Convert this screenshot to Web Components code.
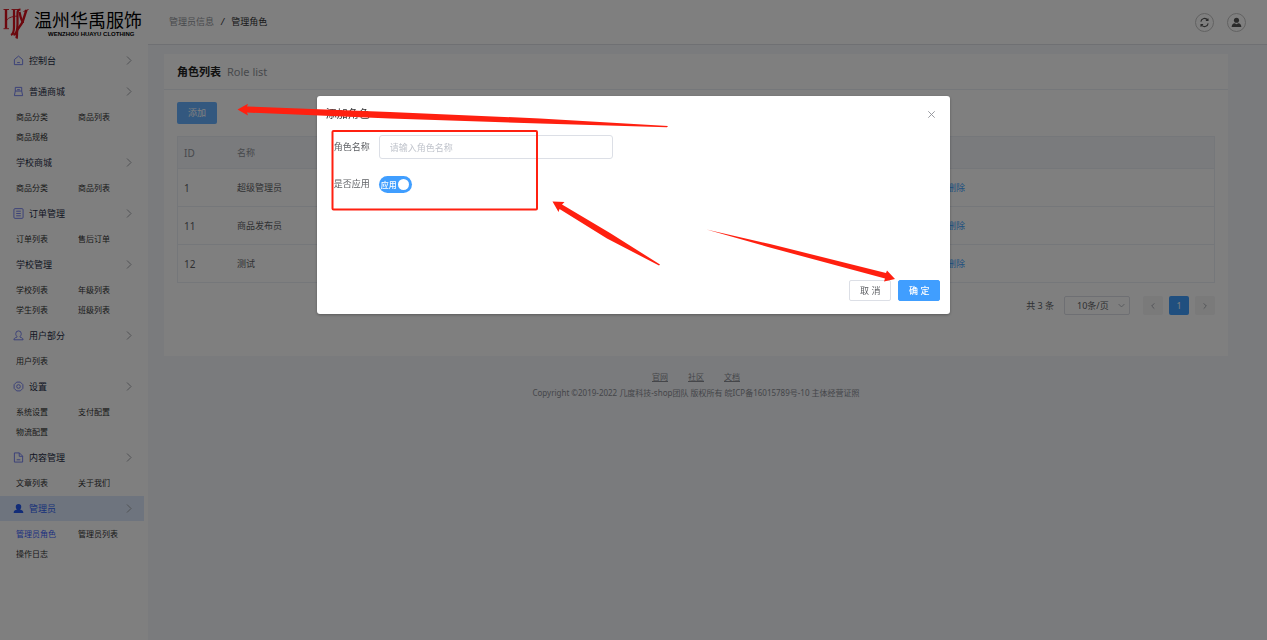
<!DOCTYPE html>
<html lang="zh-CN">
<head>
<meta charset="utf-8">
<title>管理角色</title>
<style>
html,body{margin:0;height:100%}
body{font-family:"Noto Sans","Noto Sans CJK SC",sans-serif;font-size:9px;line-height:14px;color:#606266;background:#f4f6fa}
</style>
</head>
<body>
<role-app></role-app>
<script>
const icons={
home:'<path d="M1.500 5 6 1.200 10.500 5v5.500h-9zM4.500 8.300h3" />',
shop:'<path d="M2.500 1.500h7v4h-7zM2.500 5.500 1.500 10.500h9L9.500 5.500M4.500 4h3"/>',
list:'<rect x="1" y=".7" width="10" height="10.600" rx="1.200"/><path d="M3.500 3.500h5M3.500 6h5M3.500 8.500h5"/>',
user:'<path d="M1 10.700c0-1.800 1.400-2.300 3.300-2.900V7C3.300 6 3 5 3 4a3 3 0 0 1 6 0c0 1-.3 2-1.300 3v.8c1.900.6 3.300 1.100 3.300 2.900z"/>',
gear:'<path d="M4 1.200h4L10.800 4v4L8 10.800H4L1.200 8V4z"/><circle cx="6" cy="6" r="2"/>',
doc:'<path d="M1.500 1h5.500l3.500 3.500V11h-9zM6.800 1v3.700h3.700M4 8.500h4"/>',
admin:'<path fill="currentColor" stroke="none" d="M.7 11c0-2.600 1.600-3.200 3.600-3.800C3.400 6.300 3 5.300 3 4a3 3 0 0 1 6 0c0 1.300-.4 2.300-1.300 3.200 2 .6 3.600 1.200 3.600 3.800z"/>'
};
const svg=(body,vb='0 0 12 12')=>`<svg viewBox="${vb}" fill="none" stroke="currentColor" aria-hidden="true">${body}</svg>`;
function define(name,html,init){
  const t=document.createElement('template');t.innerHTML=html;
  customElements.define(name,class extends HTMLElement{
    connectedCallback(){
      if(this.shadowRoot)return;
      this.attachShadow({mode:'open'}).append(t.content.cloneNode(true));
      if(init)init(this,this.shadowRoot);
    }
  });
}

define('brand-logo',`<style>
:host{display:flex;height:44px;gap:5px;padding-left:3px;color:#000;box-sizing:border-box}
svg{width:26px;height:40px}
.name{padding-top:9px}
b,small{display:block;white-space:nowrap}
b{font:400 18px/20px "Noto Sans CJK SC",sans-serif}
small{font:bold 6px/6px "Liberation Sans",sans-serif;padding:2px 0 0 14px}
</style>
<svg viewBox="0 0 26 40" fill="none" stroke="#d8101c" aria-hidden="true">
<path stroke-width="2.400" d="M3 9.500v19"/><path stroke-width=".9" d="M.5 9.500h5.500M.5 28.700h5.500M8.500 9.500h8M3 22c1-4 5-5.500 12-6"/>
<path stroke-width="2.200" d="M11 10v17c0 4-1 7-3 8M10.500 35c3-1 4-5 4-11V13c0-2 1-3.500 3-3.500"/>
<path stroke-width="2.200" d="M16.500 12c1 5 2 10 4.500 10"/><path stroke-width="2.400" d="M23.500 10c-2 5-2.500 9-4.500 13-2 4-5 5-5 9 0 3 0 5-.5 6.500"/><path stroke-width="1" d="M20.500 11.500l5-2"/>
</svg><div class="name"><b>温州华禹服饰</b><small>WENZHOU HUAYU CLOTHING</small></div>`);

define('menu-group',`<style>
:host{display:block}
a{color:inherit;text-decoration:none}
.main{display:flex;align-items:center;height:25px;margin-right:4px;padding:0 12px 0 13px;font-size:9px;color:#1d2b45;box-sizing:border-box}
.main svg{width:11px;height:11px;color:#6b78f0}
.icon{display:flex;margin-right:5px}
.icon:empty{margin-right:3px}
.main .arrow{width:7px;height:9px;margin-left:auto;color:#a0a3a8}
.sub{display:grid;grid-template-columns:62px 62px;padding:3px 0 3px 16px}
.sub ::slotted(a){font-size:8px;line-height:20px;color:#333;text-decoration:none;white-space:nowrap}
.sub ::slotted(a.on){color:#3a62ff}
:host([active]) .main{background:#dde9fc;color:#2f62f5}
:host([active]) .icon svg{color:#2458f0}
</style>
<a class="main" href="#"><span class="icon"></span><span class="label"></span><svg class="arrow" viewBox="0 0 7 9" fill="none" stroke="currentColor"><path d="M2 .5l4 4-4 4"/></svg></a>
<div class="sub"><slot></slot></div>`,(h,r)=>{
  r.querySelector('.label').textContent=h.getAttribute('label');
  const i=h.getAttribute('icon');if(i)r.querySelector('.icon').innerHTML=svg(icons[i]);
});

define('side-menu',`<style>
:host{display:block;background:#fff;width:148px;flex:none}
nav{padding-top:4px}
</style><brand-logo></brand-logo>
<nav>
<menu-group icon="home" label="控制台"></menu-group>
<menu-group icon="shop" label="普通商城"><a href="#">商品分类</a><a href="#">商品列表</a><a href="#">商品规格</a></menu-group>
<menu-group label="学校商城"><a href="#">商品分类</a><a href="#">商品列表</a></menu-group>
<menu-group icon="list" label="订单管理"><a href="#">订单列表</a><a href="#">售后订单</a></menu-group>
<menu-group label="学校管理"><a href="#">学校列表</a><a href="#">年级列表</a><a href="#">学生列表</a><a href="#">班级列表</a></menu-group>
<menu-group icon="user" label="用户部分"><a href="#">用户列表</a></menu-group>
<menu-group icon="gear" label="设置"><a href="#">系统设置</a><a href="#">支付配置</a><a href="#">物流配置</a></menu-group>
<menu-group icon="doc" label="内容管理"><a href="#">文章列表</a><a href="#">关于我们</a></menu-group>
<menu-group icon="admin" label="管理员" active><a href="#" class="on">管理员角色</a><a href="#">管理员列表</a><a href="#">操作日志</a></menu-group>
</nav>`);

define('top-bar',`<style>
:host{display:flex;align-items:center;height:45px;box-sizing:border-box;padding:0 21px;background:#fff;border-bottom:1px solid #dfe1e6}
.crumb{flex:1;display:flex;gap:7px;color:#909399}
.crumb a{color:inherit;text-decoration:none}
.crumb b{font-weight:400;color:#303133}
.crumb i{color:#303133}
button{width:19px;height:19px;padding:0;margin-left:13px;border:1px solid #c4c4c4;border-radius:50%;background:none;color:#555;display:grid;place-items:center}
svg{width:11px;height:11px}
</style>
<div class="crumb"><a href="#">管理员信息</a><i>/</i><b>管理角色</b></div>
<button aria-label="刷新">${svg('<path stroke-width="1.200" d="M2 5a4 4 0 0 1 7.400-1.500M10 7a4 4 0 0 1-7.400 1.500M9.800 1.500v2.300H7.500M2.200 10.500V8.200h2.300"/>')}</button>
<button aria-label="用户">${svg('<g fill="currentColor" stroke="none"><circle cx="6" cy="3.500" r="2.800"/><path d="M.7 11c0-2.800 1.500-4 3.300-4.300L6 8l2-1.300c1.800.3 3.300 1.500 3.300 4.300z"/></g>')}</button>`);

define('role-table',`<style>
:host{display:block}
table{width:100%;border-collapse:separate;border-spacing:0;border:1px solid #ebeef5;border-bottom:0;table-layout:fixed;box-sizing:border-box}
th,td{padding:0 6px;text-align:left;font-weight:400;border-bottom:1px solid #ebeef5;box-sizing:border-box;height:38px}
th{height:32px;background:#f4f6fa;color:#909399}
.n{font-size:10px}
col.id{width:53px}col.ops{width:450px}
a{color:#409eff;text-decoration:none;margin-right:8px}
.o{padding-left:157px}
</style>
<table><colgroup><col class="id"><col><col class="ops"></colgroup>
<thead><tr><th class="n">ID</th><th>名称</th><th>操作</th></tr></thead>
<tbody>
<tr><td class="n">1</td><td>超级管理员</td><td class="o"><a href="#">编辑</a><a href="#">删除</a></td></tr>
<tr><td class="n">11</td><td>商品发布员</td><td class="o"><a href="#">编辑</a><a href="#">删除</a></td></tr>
<tr><td class="n">12</td><td>测试</td><td class="o"><a href="#">编辑</a><a href="#">删除</a></td></tr>
</tbody></table>`);

define('page-nav',`<style>
:host{display:flex;justify-content:flex-end;align-items:center;margin-top:13px}
.select{position:relative;margin:0 13px 0 10px;color:#606266}
select{appearance:none;width:66px;height:19px;border:1px solid #dcdfe6;border-radius:2px;background:#fff;color:inherit;font:inherit;padding:0 0 0 12px;display:block;line-height:17px}
.select svg{position:absolute;right:5px;top:6px;width:7px;height:7px;color:#a8acb4}
button{width:20px;height:19px;border:0;border-radius:2px;background:#f4f4f5;color:#a8abb2;padding:0;font:inherit;display:grid;place-items:center}
button+button{margin-left:6px}
button.on{background:#409eff;color:#fff}
button svg{width:8px;height:8px}
</style><span>共 3 条</span><span class="select"><select aria-label="每页条数"><option>10条/页</option></select>${svg('<path stroke-width="1.500" d="M1 3.500l5 5 5-5"/>')}</span>
<button aria-label="上一页">${svg('<path stroke-width="1.500" d="M8 2 4 6l4 4"/>')}</button><button class="on">1</button><button aria-label="下一页">${svg('<path stroke-width="1.500" d="M4 2l4 4-4 4"/>')}</button>`);

define('role-card',`<style>
:host{display:block;background:#fff}
header{display:flex;align-items:center;gap:6px;height:36px;box-sizing:border-box;padding:0 13px;border-bottom:1px solid #ebeef5;font-size:11px}
h1{font-size:11px;margin:0;color:#222}
header span{color:#909399}
section{padding:12px 13px 41px}
.add{display:block;height:22px;width:40px;margin-bottom:12px;border:0;border-radius:2px;background:#66b1ff;color:#fff;font:inherit;padding:0}
</style>
<header><h1>角色列表</h1><span>Role list</span></header>
<section><button class="add">添加</button><role-table></role-table><page-nav></page-nav></section>`);

define('page-footer',`<style>
:host{display:block;text-align:center;font-size:8px;line-height:16px;color:#8a8d94;padding-top:13px}
div{display:flex;justify-content:center;gap:20px}
a{color:inherit}
p{margin:0}
</style><div><a href="#">官网</a><a href="#">社区</a><a href="#">文档</a></div>
<p>Copyright ©2019-2022 几度科技-shop团队 版权所有 皖ICP备16015789号-10 主体经营证照</p>`);

define('toggle-switch',`<style>
:host{display:block}
label{display:flex;align-items:center;box-sizing:border-box;width:33px;height:17px;border-radius:9px;background:#409eff;color:#fff;font-size:8px;font-weight:500;padding:0 3px 0 2px;justify-content:space-between;position:relative}
label:after{content:"";width:11px;height:11px;border-radius:50%;background:#fff;flex:none}
input{position:absolute;inset:0;margin:0;opacity:0}
</style><label><input type="checkbox" role="switch" checked aria-label="是否应用"><span>应用</span></label>`);

define('role-dialog',`<style>
:host{position:fixed;inset:0;background:rgba(0,0,0,.5)}
form{width:50%;margin:15vh auto 0;background:#fff;border-radius:3px;box-shadow:0 1px 3px rgba(0,0,0,.3);box-sizing:border-box}
header{display:flex;align-items:center;justify-content:space-between;padding:10px 13px 0 9px;height:26px;box-sizing:border-box}
h2{font-size:11px;font-weight:400;margin:0;color:#303133}
header button{width:11px;height:12px;border:0;background:none;color:#909399;padding:0}
header svg{width:11px;height:11px;display:block}
.row{display:flex;gap:9px;padding-left:17px}
.row>label,.row>span{line-height:24px}
.first{padding-top:13px}
.second{padding-top:13px;height:25px}
input{width:234px;height:24px;box-sizing:border-box;border:1px solid #dcdfe6;border-radius:3px;padding:0 10px;font:inherit;background:#fff}
input::placeholder{color:#c0c4cc;opacity:1}
toggle-switch{padding-top:4px}
footer{display:flex;justify-content:flex-end;gap:7px;padding:83px 10px 13px}
footer button{width:42px;height:21px;box-sizing:border-box;border:1px solid #dcdfe6;border-radius:2px;background:#fff;color:#606266;font:inherit;padding:0}
footer .ok{background:#409eff;border-color:#409eff;color:#fff;font-weight:500}
</style>
<form role="dialog" aria-labelledby="t">
<header><h2 id="t">添加角色</h2><button type="button" aria-label="关闭">${svg('<path d="M2.500 2.500l7 7M9.500 2.500l-7 7"/>')}</button></header>
<div class="row first"><label for="n">角色名称</label><input id="n" placeholder="请输入角色名称"></div>
<div class="row second"><span>是否应用</span><toggle-switch></toggle-switch></div>
<footer><button type="button">取 消</button><button type="button" class="ok">确 定</button></footer>
</form>`);

define('guide-marks',`<style>
:host{position:fixed;top:0;left:50%;width:0;pointer-events:none}
svg{display:block;width:1267px;height:640px;margin-left:-634px}
</style><svg viewBox="0 0 1267 640" fill="#ff2010" aria-hidden="true">
<path d="M237.500 109.500 248 103.800 247 106.500 390 112 540 118.500 668 126 667 127.200 540 123.500 390 118.500 247 112.500 248 115.500z"/>
<path d="M552.500 201.500 564.500 202 562 204.500 610 233 660 264.500 659 265.500 607 238.500 559.500 209 558.500 212z"/>
<path d="M706.500 229.500 770 244 886 273 887 270.500 895 279 884 281.500 885 278.500 768 247z"/>
<rect x="332.500" y="131" width="204.500" height="78.500" rx="1" fill="none" stroke="#ff2010" stroke-width="2"/></svg>`);

define('role-app',`<style>
:host{display:flex;min-height:100vh}
main{flex:1;min-width:0}
.content{padding:9px 39px 16px 16px}
</style>
<side-menu></side-menu><main><top-bar></top-bar><div class="content"><role-card></role-card><page-footer></page-footer></div></main>
<role-dialog></role-dialog><guide-marks></guide-marks>`);
</script>
</body>
</html>
